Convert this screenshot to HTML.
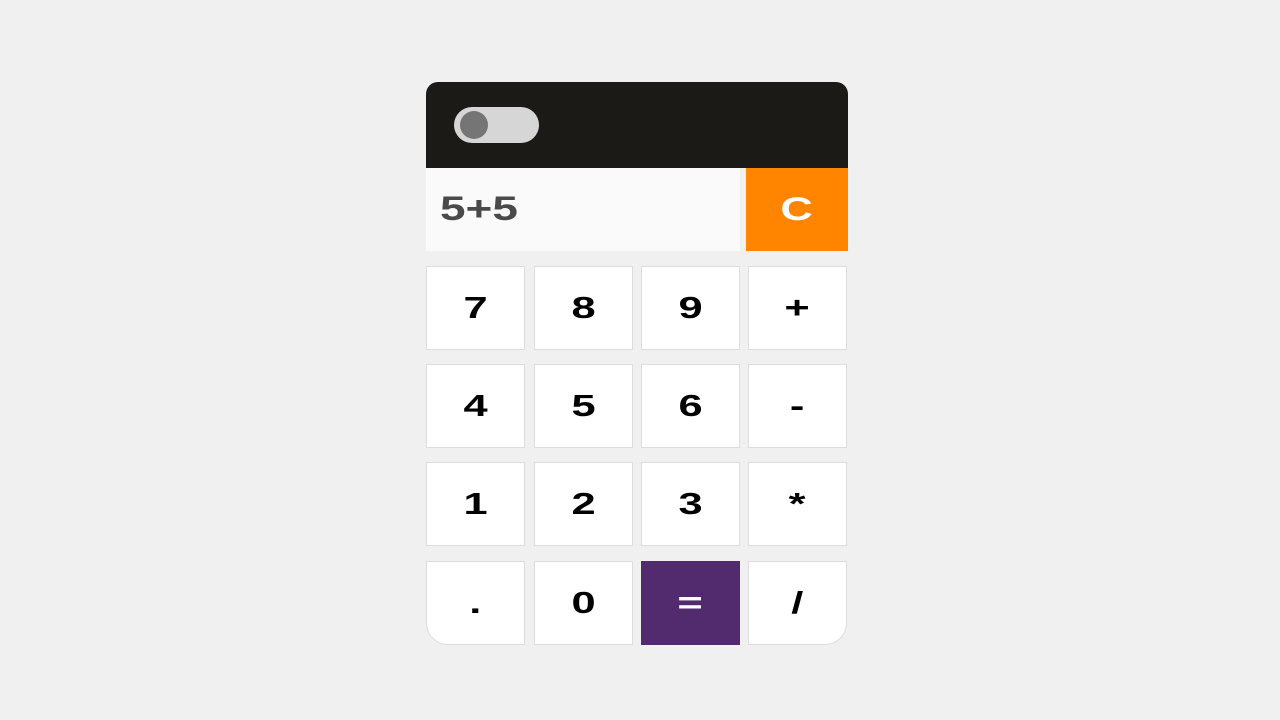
<!DOCTYPE html>
<html><head><style>
body{margin:0;width:1280px;height:720px;background:#f0f0f0;position:relative;overflow:hidden;font-family:"Liberation Sans",sans-serif}
.a{position:absolute;box-sizing:border-box}
.hd{left:426px;top:82px;width:422px;height:86px;background:#1c1a16;border-radius:12px 12px 0 0}
.tg{left:454px;top:107px;width:85px;height:36px;background:#d6d6d6;border-radius:18px}
.kn{left:460px;top:111px;width:28px;height:28px;background:#757575;border-radius:50%}
.dp{left:426px;top:168px;width:314px;height:83px;background:#fafafa;color:#4a4a4a;font-size:34px;font-weight:bold;line-height:83px;padding-left:14px}
.dp span{display:inline-block;transform:scaleX(1.35);transform-origin:left center}
.c{left:746px;top:168px;width:102px;height:83px;background:#ff8500;color:#fff;font-size:32px;font-weight:bold;text-align:center;line-height:83px}
.b{background:#fff;border:1px solid #ddd;text-align:center;font-size:31px;font-weight:bold;color:#000;width:99px;height:84px;line-height:82px}
.c span,.b span{display:inline-block;transform:scaleX(1.4)}
</style></head><body>
<div class="a hd"></div>
<div class="a tg"></div><div class="a kn"></div>
<div class="a dp"><span>5+5</span></div>
<div class="a c"><span>C</span></div>
<div class="a b" style="left:426px;top:266px"><span>7</span></div>
<div class="a b" style="left:534px;top:266px"><span>8</span></div>
<div class="a b" style="left:641px;top:266px"><span>9</span></div>
<div class="a b" style="left:748px;top:266px"><span>+</span></div>
<div class="a b" style="left:426px;top:364px"><span>4</span></div>
<div class="a b" style="left:534px;top:364px"><span>5</span></div>
<div class="a b" style="left:641px;top:364px"><span>6</span></div>
<div class="a b" style="left:748px;top:364px"><span>-</span></div>
<div class="a b" style="left:426px;top:462px"><span>1</span></div>
<div class="a b" style="left:534px;top:462px"><span>2</span></div>
<div class="a b" style="left:641px;top:462px"><span>3</span></div>
<div class="a b" style="left:748px;top:462px"><span>*</span></div>
<div class="a b" style="left:426px;top:561px;border-radius:0 0 0 22px"><span>.</span></div>
<div class="a b" style="left:534px;top:561px"><span>0</span></div>
<div class="a b" style="left:641px;top:561px;background:#522a6e;border-color:#522a6e;color:#fff"><span>=</span></div>
<div class="a b" style="left:748px;top:561px;border-radius:0 0 22px 0"><span>/</span></div>
</body></html>
